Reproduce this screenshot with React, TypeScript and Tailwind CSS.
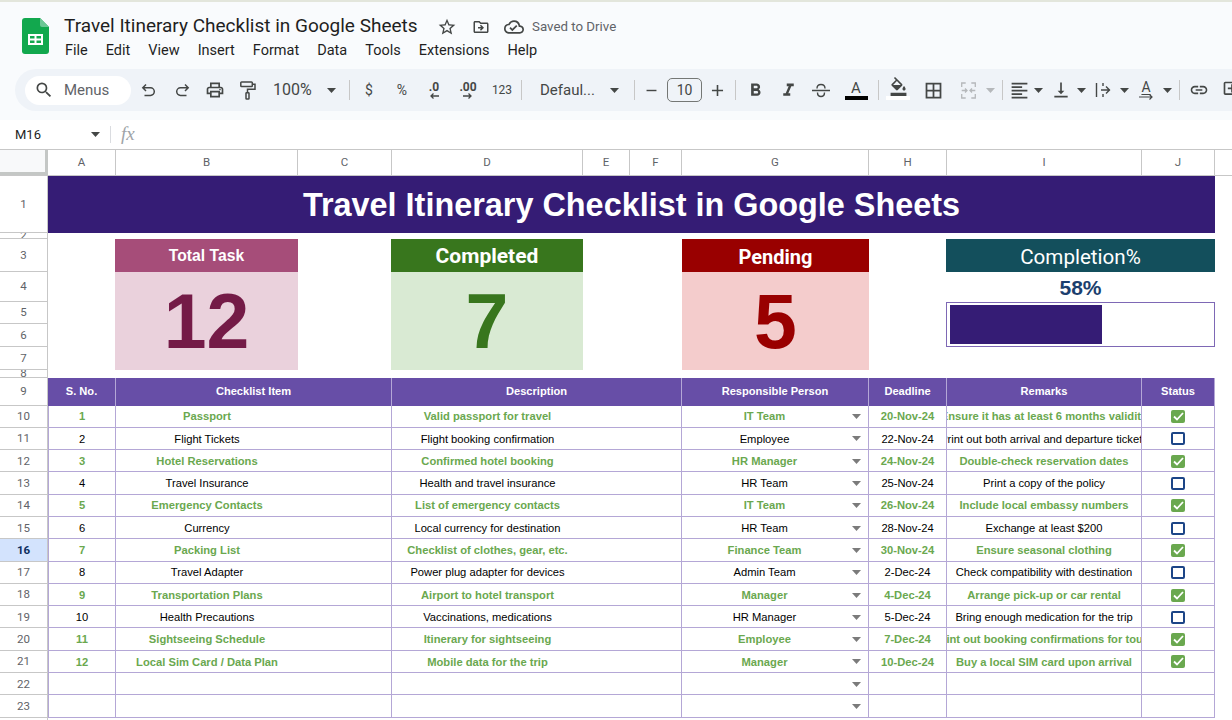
import type { ReactNode } from "react";
import {
  MdSearch,
  MdOutlinePrint,
  MdFormatBold,
  MdFormatItalic,
  MdFormatColorFill,
  MdBorderAll,
  MdFormatAlignLeft,
  MdVerticalAlignBottom,
  MdLink,
  MdOutlineAddComment,
  MdAdd,
  MdRemove,
  MdStarBorder,
  MdOutlineDriveFileMove,
  MdOutlineCloudDone,
} from "react-icons/md";

const menus = ["File", "Edit", "View", "Insert", "Format", "Data", "Tools", "Extensions", "Help"];

const columns = [
  { label: "A", w: "w-[68px]" },
  { label: "B", w: "w-[182px]" },
  { label: "C", w: "w-[94px]" },
  { label: "D", w: "w-[191px]" },
  { label: "E", w: "w-[47px]" },
  { label: "F", w: "w-[52px]" },
  { label: "G", w: "w-[187px]" },
  { label: "H", w: "w-[78px]" },
  { label: "I", w: "w-[195px]" },
  { label: "J", w: "w-[73px]" },
];

const topRows = [
  { n: 1, h: "h-[57px]" },
  { n: 2, h: "h-[6px]" },
  { n: 3, h: "h-[33px]" },
  { n: 4, h: "h-[30px]" },
  { n: 5, h: "h-[22px]" },
  { n: 6, h: "h-[23px]" },
  { n: 7, h: "h-[23px]" },
  { n: 8, h: "h-[8px]" },
  { n: 9, h: "h-[27.5px]" },
];

const items = [
  { no: 1, item: "Passport", desc: "Valid passport for travel", who: "IT Team", date: "20-Nov-24", note: "Ensure it has at least 6 months validity", done: true },
  { no: 2, item: "Flight Tickets", desc: "Flight booking confirmation", who: "Employee", date: "22-Nov-24", note: "Print out both arrival and departure tickets", done: false },
  { no: 3, item: "Hotel Reservations", desc: "Confirmed hotel booking", who: "HR Manager", date: "24-Nov-24", note: "Double-check reservation dates", done: true },
  { no: 4, item: "Travel Insurance", desc: "Health and travel insurance", who: "HR Team", date: "25-Nov-24", note: "Print a copy of the policy", done: false },
  { no: 5, item: "Emergency Contacts", desc: "List of emergency contacts", who: "IT Team", date: "26-Nov-24", note: "Include local embassy numbers", done: true },
  { no: 6, item: "Currency", desc: "Local currency for destination", who: "HR Team", date: "28-Nov-24", note: "Exchange at least $200", done: false },
  { no: 7, item: "Packing List", desc: "Checklist of clothes, gear, etc.", who: "Finance Team", date: "30-Nov-24", note: "Ensure seasonal clothing", done: true },
  { no: 8, item: "Travel Adapter", desc: "Power plug adapter for devices", who: "Admin Team", date: "2-Dec-24", note: "Check compatibility with destination", done: false },
  { no: 9, item: "Transportation Plans", desc: "Airport to hotel transport", who: "Manager", date: "4-Dec-24", note: "Arrange pick-up or car rental", done: true },
  { no: 10, item: "Health Precautions", desc: "Vaccinations, medications", who: "HR Manager", date: "5-Dec-24", note: "Bring enough medication for the trip", done: false },
  { no: 11, item: "Sightseeing Schedule", desc: "Itinerary for sightseeing", who: "Employee", date: "7-Dec-24", note: "Print out booking confirmations for tours", done: true },
  { no: 12, item: "Local Sim Card / Data Plan", desc: "Mobile data for the trip", who: "Manager", date: "10-Dec-24", note: "Buy a local SIM card upon arrival", done: true },
];

const rowNumbers = Array.from({ length: 14 }, (_, i) => i + 10);

function Caret({ className = "text-[#444746]" }: { className?: string }) {
  return (
    <svg width="9" height="5" viewBox="0 0 9 5" className={className}>
      <path d="M0 0h9L4.500 5z" fill="currentColor" />
    </svg>
  );
}

function SheetsLogo() {
  return (
    <svg width="27" height="36" viewBox="0 0 27 36">
      <path d="M3 0h15l9 9v24a3 3 0 0 1-3 3H3a3 3 0 0 1-3-3V3a3 3 0 0 1 3-3z" fill="#12a84e" />
      <path d="M18 0l9 9h-7a2 2 0 0 1-2-2z" fill="#6cc795" />
      <path d="M6 16h15v11H6z M8 18v2.500h4.500V18z M14.500 18v2.500H19V18z M8 22.500V25h4.500v-2.500z M14.500 22.500V25H19v-2.500z" fill="#fff" fillRule="evenodd" />
    </svg>
  );
}

function UndoIcon({ flip = false }: { flip?: boolean }) {
  return (
    <svg width="15" height="15" viewBox="0 0 15 15" fill="none" stroke="currentColor" strokeWidth="1.500" className={flip ? "-scale-x-100" : ""}>
      <path d="M5 1.500L1.800 4.800 5 8M1.800 4.800H9.500a3.800 3.800 0 0 1 0 7.600H3.500" />
    </svg>
  );
}

function Slot({ w, children }: { w: string; children?: ReactNode }) {
  return <div className={`${w} shrink-0 flex items-center justify-center text-[#444746]`}>{children}</div>;
}

function Sep({ w }: { w: string }) {
  return (
    <div className={`${w} shrink-0 flex justify-center`}>
      <div className="w-px h-[20px] bg-[#c7c7c7]" />
    </div>
  );
}

function Toolbar() {
  return (
    <div className="h-[42px] ml-[15px] pl-[10px] bg-[#eff3f8] rounded-l-[21px] flex items-center font-['Roboto',sans-serif] text-[#444746]">
      <div className="w-[106px] h-[29px] shrink-0 bg-white rounded-full flex items-center pl-[9px] gap-[10px]">
        <MdSearch size={20} />
        <span className="text-[15px] text-[#5f6368]">Menus</span>
      </div>
      <Slot w="w-[34px]"><UndoIcon /></Slot>
      <Slot w="w-[34px]"><UndoIcon flip /></Slot>
      <Slot w="w-[32px]"><MdOutlinePrint size={20} /></Slot>
      <Slot w="w-[34px]">
        <svg width="16" height="19" viewBox="0 0 16 19" fill="none" stroke="currentColor" strokeWidth="1.500">
          <rect x=".8" y="1" width="11.500" height="4.500" rx=".8" />
          <path d="M12.300 3.200h2.700v5H7.500v3.500" />
          <rect x="6" y="11.700" width="3" height="6.300" rx=".6" />
        </svg>
      </Slot>
      <div className="w-[56px] shrink-0 pl-[8px] text-[16px]">100%</div>
      <Slot w="w-[20px]"><Caret /></Slot>
      <Sep w="w-[16px]" />
      <Slot w="w-[24px]"><span className="text-[14px]">$</span></Slot>
      <Slot w="w-[42px]"><span className="text-[14px]">%</span></Slot>
      <Slot w="w-[22px]">
        <div className="flex flex-col items-center leading-none">
          <span className="text-[12px] font-bold leading-[11px]">.0</span>
          <svg width="10" height="6" viewBox="0 0 10 6"><path d="M10 3H2M4.500 .5L2 3l2.500 2.500" stroke="currentColor" strokeWidth="1.300" fill="none" /></svg>
        </div>
      </Slot>
      <Slot w="w-[46px]">
        <div className="flex flex-col items-center leading-none">
          <span className="text-[12px] font-bold leading-[11px]">.00</span>
          <svg width="10" height="6" viewBox="0 0 10 6"><path d="M0 3h8M5.500 .5L8 3 5.500 5.500" stroke="currentColor" strokeWidth="1.300" fill="none" /></svg>
        </div>
      </Slot>
      <Slot w="w-[22px]"><span className="text-[12px]">123</span></Slot>
      <Sep w="w-[16px]" />
      <div className="w-[76px] shrink-0 pl-[11px] text-[15px] whitespace-nowrap">Defaul...</div>
      <Slot w="w-[18px]"><Caret /></Slot>
      <Sep w="w-[22px]" />
      <Slot w="w-[12px]"><MdRemove size={17} className="shrink-0" /></Slot>
      <div className="ml-[10px] w-[35px] h-[24px] shrink-0 border border-[#747775] rounded-[5px] flex items-center justify-center text-[14px]">10</div>
      <Slot w="w-[30px]"><MdAdd size={19} /></Slot>
      <Sep w="w-[6px]" />
      <Slot w="w-[34px]"><MdFormatBold size={21} /></Slot>
      <Slot w="w-[32px]"><MdFormatItalic size={21} /></Slot>
      <Slot w="w-[34px]">
        <svg width="18" height="15" viewBox="0 0 18 15" fill="none" stroke="currentColor" strokeWidth="1.400">
          <path d="M0 7.500h18M5 5.500C5 3 6.800 1.500 9 1.500S13 3 13 5.500M5.500 9.500C5.500 12 7 13.500 9 13.500s3.500-1.500 3.500-4" />
        </svg>
      </Slot>
      <Slot w="w-[36px]">
        <div className="flex flex-col items-center w-[23px]">
          <span className="text-[15px] leading-[16px]">A</span>
          <div className="w-[23px] h-[4px] bg-black" />
        </div>
      </Slot>
      <Sep w="w-[8px]" />
      <Slot w="w-[32px]">
        <div className="flex flex-col items-center w-[24px]">
          <MdFormatColorFill size={19} className="-mt-[3px]" />
          <div className="w-[24px] h-[4px] bg-white" />
        </div>
      </Slot>
      <Slot w="w-[38px]"><MdBorderAll size={21} /></Slot>
      <Slot w="w-[32px]">
        <svg width="15" height="17" viewBox="0 0 15 17" fill="none" stroke="#b5b8bb" strokeWidth="1.300">
          <path d="M.7 5V1h4M.7 12v4h4M14.300 5V1h-4M14.300 12v4h-4" />
          <path d="M.7 8.500h5M14.300 8.500h-5M4 6.500l2 2-2 2M11 6.500l-2 2 2 2" />
        </svg>
      </Slot>
      <Slot w="w-[12px]"><Caret className="text-[#b5b8bb]" /></Slot>
      <Sep w="w-[12px]" />
      <Slot w="w-[22px]"><MdFormatAlignLeft size={21} /></Slot>
      <Slot w="w-[16px]"><Caret /></Slot>
      <Slot w="w-[29px]"><MdVerticalAlignBottom size={20} /></Slot>
      <Slot w="w-[12px]"><Caret /></Slot>
      <Slot w="w-[31px]">
        <svg width="16" height="16" viewBox="0 0 16 16" fill="none" stroke="currentColor" strokeWidth="1.400">
          <path d="M1.500 1v14M6 8h9M11 4.500L14.500 8 11 11.500M8 1v3M8 12v3" />
        </svg>
      </Slot>
      <Slot w="w-[12px]"><Caret /></Slot>
      <Slot w="w-[32px]">
        <div className="flex flex-col items-center">
          <span className="text-[14px] leading-[13px] underline underline-offset-2">A</span>
          <svg width="15" height="6" viewBox="0 0 15 6"><path d="M0 3h13M10.500 .5L13 3l-2.500 2.500" stroke="currentColor" strokeWidth="1.200" fill="none" /></svg>
        </div>
      </Slot>
      <Slot w="w-[10px]"><Caret /></Slot>
      <Sep w="w-[14px]" />
      <Slot w="w-[26px]"><MdLink size={20} /></Slot>
      <Slot w="w-[40px]"><MdOutlineAddComment size={20} className="shrink-0" /></Slot>
    </div>
  );
}

function KpiCard({ title, value, head, body, ink, pos, titleSize }: { title: string; value: number; head: string; body: string; ink: string; pos: string; titleSize: string }) {
  return (
    <div className={`${pos} flex flex-col ${body}`}>
      <div className={`h-[33px] ${head} flex items-center justify-center text-white font-bold ${titleSize}`}>{title}</div>
      <div className={`flex-1 flex items-center justify-center text-[77px] leading-none font-bold ${ink}`}>{value}</div>
    </div>
  );
}

function Cell({ w, className = "", children }: { w: string; className?: string; children?: ReactNode }) {
  return <div className={`${w} shrink-0 h-full pt-[1px] flex items-center overflow-hidden border-r border-[#b4a7d6] ${className}`}>{children}</div>;
}

function Centered({ children, w = "w-full" }: { children?: ReactNode; w?: string }) {
  return <div className={`${w} shrink-0 flex justify-center whitespace-nowrap overflow-hidden`}><span className="shrink-0">{children}</span></div>;
}

function DataRow({ row }: { row?: (typeof items)[number] }) {
  const tone = row ? (row.done ? "font-bold text-[#6aa84f]" : "text-black") : "";
  return (
    <div className={`h-[22.3px] flex border-b border-[#b4a7d6] text-[11.2px] ${tone}`}>
      <Cell w="w-[68px]" className="border-l"><Centered>{row?.no}</Centered></Cell>
      <Cell w="w-[276px]"><Centered w="w-[182px]">{row?.item}</Centered></Cell>
      <Cell w="w-[290px]"><Centered w="w-[191px]">{row?.desc}</Centered></Cell>
      <Cell w="w-[187px]">
        <div className="flex-1 min-w-0"><Centered>{row?.who}</Centered></div>
        <div className="w-[21px] shrink-0 flex justify-start pl-[5px]"><Caret className="text-[#7b7b7b]" /></div>
      </Cell>
      <Cell w="w-[78px]"><Centered>{row?.date}</Centered></Cell>
      <Cell w="w-[195px]"><div className="w-full flex justify-center whitespace-nowrap"><span className="shrink-0">{row?.note}</span></div></Cell>
      <Cell w="w-[73px]" className="justify-center">
        {row &&
          (row.done ? (
            <div className="w-[14px] h-[13px] rounded-[2px] bg-[#6aa84f] flex items-center justify-center">
              <svg width="11" height="9" viewBox="0 0 11 9" fill="none" stroke="#fff" strokeWidth="1.800"><path d="M1 4.500L4 7.500 10 1" /></svg>
            </div>
          ) : (
            <div className="w-[14px] h-[13px] rounded-[2px] border-2 border-[#1c4587]" />
          ))}
      </Cell>
    </div>
  );
}

export default function App() {
  return (
    <div className="w-[1232px] h-[720px] overflow-hidden bg-white flex flex-col font-['Liberation_Sans',Arial,sans-serif]">
      <div className="h-[2px] shrink-0 bg-[#e3e6dc]" />

      {/* Title, menus and toolbar */}
      <div className="h-[118px] shrink-0 bg-[#f9fbfd]">
        <div className="h-[67px] flex font-['Roboto',sans-serif]">
          <div className="pl-[22px] pt-[16px] w-[64px] shrink-0"><SheetsLogo /></div>
          <div className="pt-[13px]">
            <div className="flex items-center h-[23px]">
              <span className="text-[19px] text-[#1f1f1f] whitespace-nowrap w-[372px]">Travel Itinerary Checklist in Google Sheets</span>
              <span className="text-[#444746] flex items-center w-[96px] shrink-0">
                <MdStarBorder size={20} className="ml-[1px]" />
                <MdOutlineDriveFileMove size={18} className="ml-[15px]" />
                <MdOutlineCloudDone size={20} className="ml-[14px]" />
              </span>
              <span className="text-[13.3px] text-[#5f6368] whitespace-nowrap">Saved to Drive</span>
            </div>
            <div className="flex gap-[18px] mt-[2px] text-[14.5px] text-[#1f1f1f] pl-[1px]">
              {menus.map((m) => (
                <span key={m}>{m}</span>
              ))}
            </div>
          </div>
        </div>
        <Toolbar />
      </div>

      {/* Name box and formula bar */}
      <div className="h-[29px] shrink-0 flex items-center font-['Roboto',sans-serif] text-[#444746]">
        <span className="w-[80px] pl-[15px] shrink-0 text-[13px] text-[#1f1f1f]">M16</span>
        <Slot w="w-[30px]"><Caret /></Slot>
        <div className="w-px h-[17px] bg-[#dadce0]" />
        <span className="ml-[10px] text-[19px] italic font-['Liberation_Serif',serif] text-[#a0a4a8]">fx</span>
      </div>

      {/* Column headers */}
      <div className="h-[27px] shrink-0 flex border-t border-[#c7c7c7] border-b border-b-[#c7c7c7] font-['Roboto',sans-serif] text-[11.5px] text-[#5f6368]">
        <div className="w-[48px] shrink-0 bg-[#f8f9fa] border-r-[3px] border-b-[3px] border-[#c4c7c5]" />
        {columns.map((c) => (
          <div key={c.label} className={`${c.w} shrink-0 flex items-center justify-center border-r border-[#c7c7c7]`}>{c.label}</div>
        ))}
      </div>

      <div className="flex flex-1 min-h-0">
        {/* Row headers */}
        <div className="w-[48px] shrink-0 border-r border-[#c7c7c7] font-['Roboto',sans-serif] text-[11.5px] text-[#5f6368]">
          {topRows.map((r) => (
            <div key={r.n} className={`${r.h} flex items-center justify-center overflow-hidden border-b border-[#c7c7c7] pt-[1px]`}>{r.n}</div>
          ))}
          {rowNumbers.map((n) => (
            <div key={n} className={`h-[22.3px] flex items-center justify-center border-b border-[#c7c7c7] pt-[1px] ${n === 16 ? "bg-[#d3e3fd] font-bold text-[#0b2e5e]" : ""}`}>{n}</div>
          ))}
        </div>

        {/* Sheet */}
        <div className="w-[1167px] shrink-0">
          <div className="h-[57px] pt-[2px] bg-[#351c75] flex items-center justify-center text-white text-[32.4px] font-bold">Travel Itinerary Checklist in Google Sheets</div>

          <div className="h-[131px] mt-[6px] mb-[8px] grid grid-cols-[67px_183px_93px_192px_99px_187px_77px_269px]">
            <KpiCard pos="col-start-2" title="Total Task" value={12} head="bg-[#a64d79]" body="bg-[#ead1dc]" ink="text-[#741b47]" titleSize="text-[15.7px] pt-[1px]" />
            <KpiCard pos="col-start-4" title="Completed" value={7} head="bg-[#38761d]" body="bg-[#d9ead3]" ink="text-[#38761d]" titleSize="text-[21px] pt-[3px] font-['Roboto',sans-serif]" />
            <KpiCard pos="col-start-6" title="Pending" value={5} head="bg-[#990000]" body="bg-[#f4cccc]" ink="text-[#990000]" titleSize="text-[20px] pt-[3px] font-['Roboto',sans-serif]" />
            <div className="col-start-8 flex flex-col">
              <div className="h-[33px] pt-[3px] bg-[#134f5c] flex items-center justify-center text-white text-[20.6px] font-['Roboto',sans-serif]">Completion%</div>
              <div className="h-[30px] pt-[2px] flex items-center justify-center text-[21px] font-bold text-[#1c3f6e]">58%</div>
              <div className="h-[45px] border border-[#7e68b5] px-[3px] py-[2px]">
                <div className="w-[58.4%] h-full bg-[#351c75]" />
              </div>
            </div>
          </div>

          <div className="h-[27.5px] flex bg-[#674ea7] text-white font-bold text-[11.1px]">
            <div className="w-[68px] shrink-0 flex items-center justify-center border-r border-[#b4a7d6]">S. No.</div>
            <div className="w-[276px] shrink-0 flex items-center justify-center border-r border-[#b4a7d6]">Checklist Item</div>
            <div className="w-[290px] shrink-0 flex items-center justify-center border-r border-[#b4a7d6]">Description</div>
            <div className="w-[187px] shrink-0 flex items-center justify-center border-r border-[#b4a7d6]">Responsible Person</div>
            <div className="w-[78px] shrink-0 flex items-center justify-center border-r border-[#b4a7d6]">Deadline</div>
            <div className="w-[195px] shrink-0 flex items-center justify-center border-r border-[#b4a7d6]">Remarks</div>
            <div className="w-[73px] shrink-0 flex items-center justify-center border-r border-[#b4a7d6]">Status</div>
          </div>
          {items.map((row) => (
            <DataRow key={row.no} row={row} />
          ))}
          <DataRow />
          <DataRow />
        </div>
      </div>
    </div>
  );
}
